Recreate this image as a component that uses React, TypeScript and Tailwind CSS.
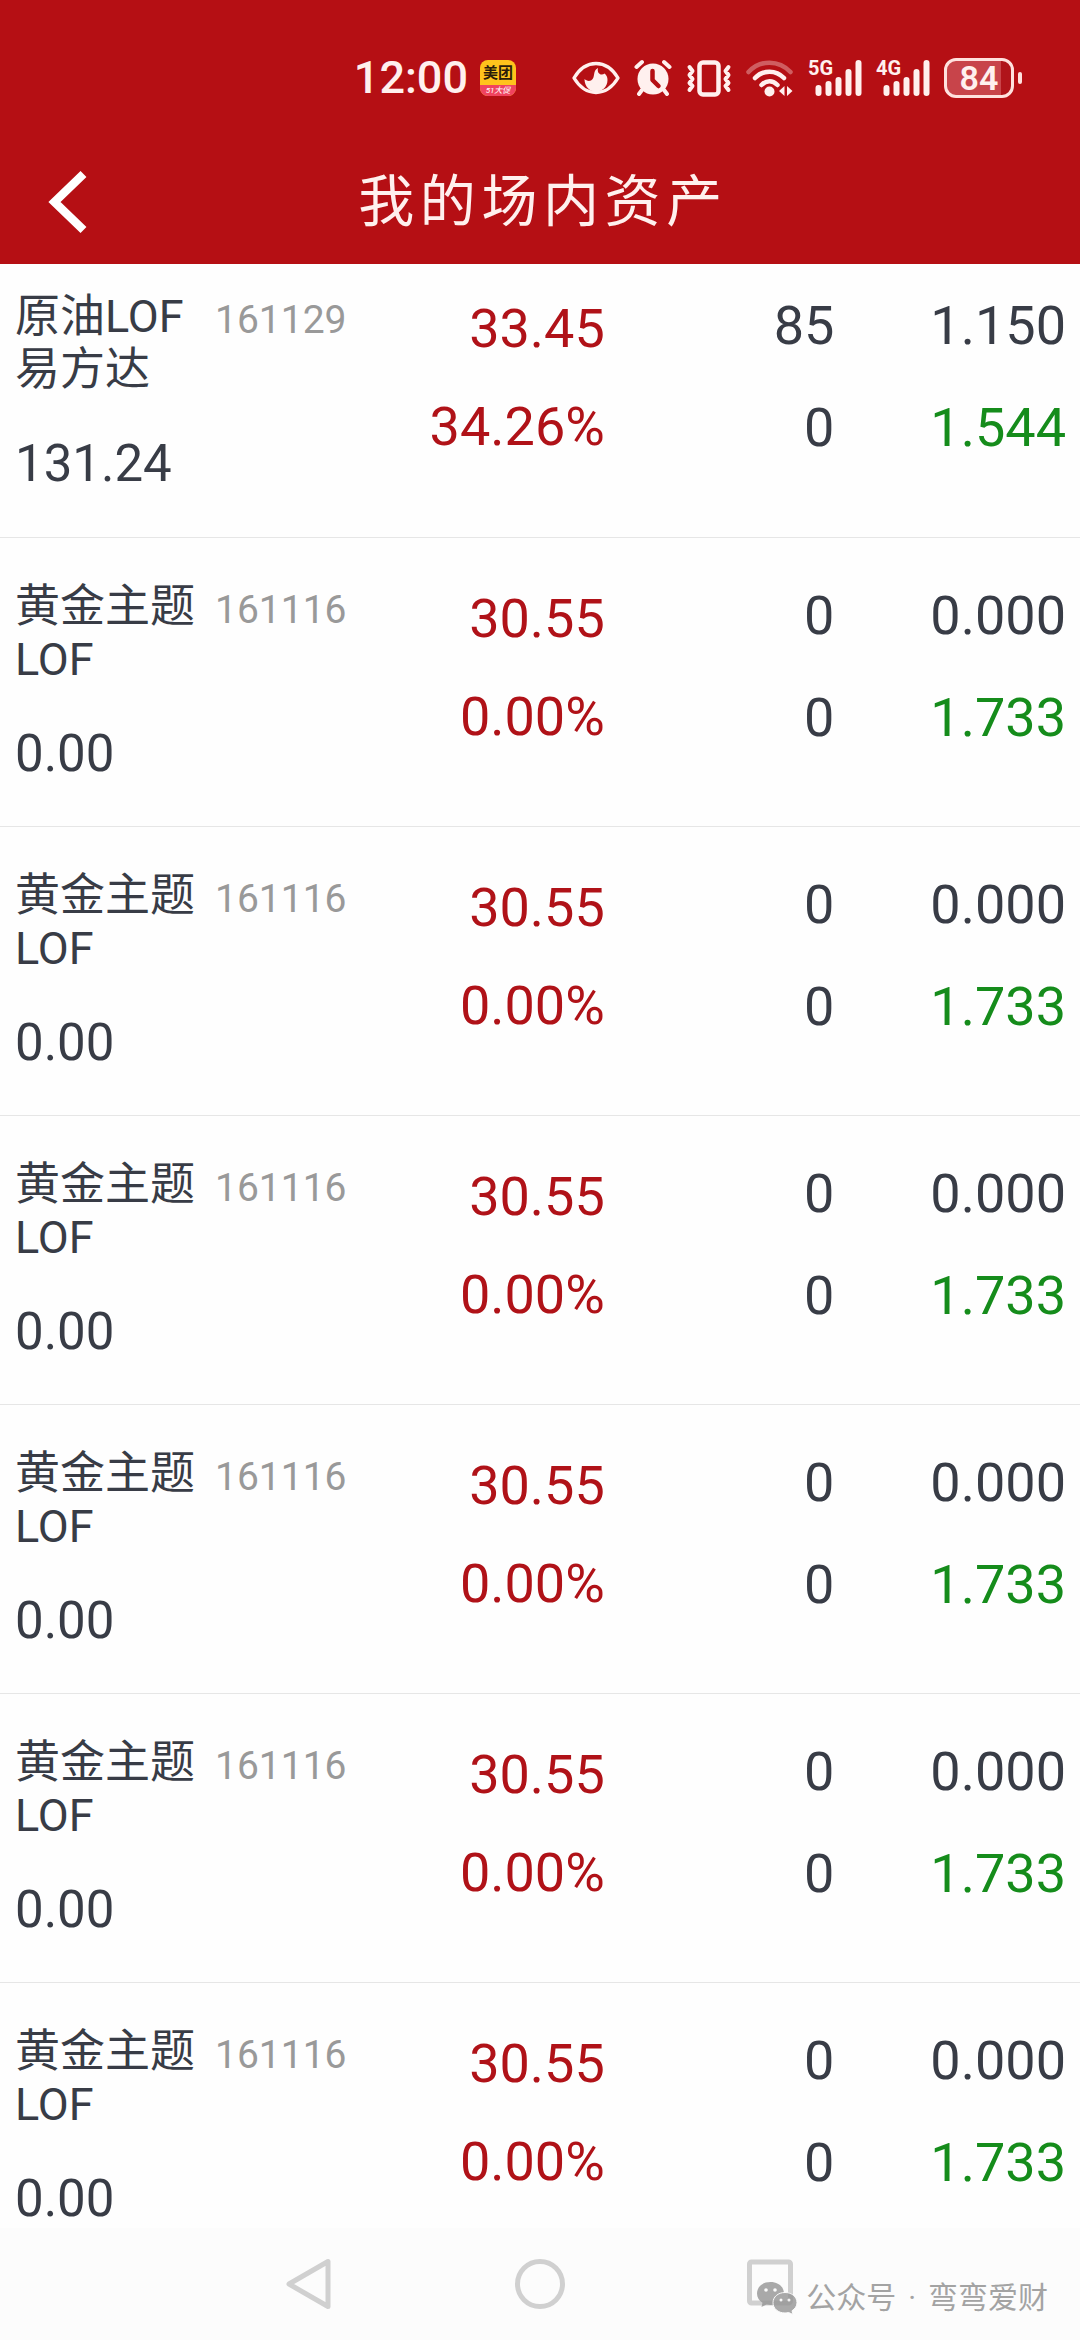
type Holding = {
  name: string;
  code: string;
  value: string;
  profit: string;
  rate: string;
  amount: string;
  available: string;
  cost: string;
  price: string;
};

const goldFund: Holding = {
  name: '黄金主题LOF',
  code: '161116',
  value: '0.00',
  profit: '30.55',
  rate: '0.00%',
  amount: '0',
  available: '0',
  cost: '0.000',
  price: '1.733',
};

const holdings: Holding[] = [
  {
    name: '原油LOF易方达',
    code: '161129',
    value: '131.24',
    profit: '33.45',
    rate: '34.26%',
    amount: '85',
    available: '0',
    cost: '1.150',
    price: '1.544',
  },
  goldFund,
  goldFund,
  goldFund,
  goldFund,
  goldFund,
  goldFund,
];

function EyeIcon() {
  return (
    <svg viewBox="0 0 48 34" className="h-[34px] w-12" fill="none">
      <path
        d="M2 17C8 7 15 2.500 24 2.500S40 7 46 17C40 27 33 31.500 24 31.500S8 27 2 17Z"
        stroke="currentColor"
        strokeWidth="3.400"
        strokeLinejoin="round"
      />
      <path
        d="M26 7C20 9.500 24 17 19 19.500C16.500 20.500 14 19.500 12.500 18C12.500 26 18 30.500 24 30.500S35.500 26 35.500 19C35.500 16 34.500 14 32.500 12.500C30 15 24.500 13 26 7Z"
        fill="currentColor"
      />
    </svg>
  );
}

function AlarmIcon() {
  return (
    <svg viewBox="0 0 38 38" className="size-[38px]" fill="none">
      <circle cx="19" cy="20" r="15.500" fill="currentColor" />
      <g stroke="currentColor" strokeWidth="4" strokeLinecap="round">
        <path d="M2.500 8 8 3M35.500 8 30 3M8 31l-3 4M30 31l3 4" />
      </g>
      <path
        d="M18.500 12v9l6 6"
        stroke="#b50f14"
        strokeWidth="4.500"
        strokeLinecap="round"
        strokeLinejoin="round"
      />
    </svg>
  );
}

function VibrateIcon() {
  return (
    <svg
      viewBox="0 0 46 38"
      className="h-[38px] w-[46px]"
      fill="none"
      stroke="currentColor"
      strokeLinecap="round"
      strokeLinejoin="round"
    >
      <rect x="13.500" y="3.500" width="19" height="32" rx="3.500" strokeWidth="4.500" />
      <path
        d="M3.500 8l3 4-3 4 3 4-3 4 3 3-3 4M42.500 8l-3 4 3 4-3 4 3 4-3 3 3 4"
        strokeWidth="4"
      />
    </svg>
  );
}

function WifiIcon() {
  return (
    <svg viewBox="0 0 48 38" className="h-[38px] w-12" fill="none">
      <g stroke="currentColor" strokeWidth="4.500" strokeLinecap="round">
        <path d="M2.500 13C14 .500 33 .500 44.500 13" opacity=".35" />
        <path d="M9 19C17 10.500 30 10.500 38 19" />
        <path d="M15.500 26c5-5 11-5 16 0" />
      </g>
      <circle cx="23.500" cy="32.500" r="5" fill="currentColor" />
      <path d="M38.500 27v10L33 32ZM41 27v10l5.500-5Z" fill="currentColor" />
    </svg>
  );
}

function Signal({ label }: { label: string }) {
  return (
    <div className="relative h-9 w-[54px]">
      <span className="absolute -top-1 left-0 text-[20px] leading-6 font-bold">
        {label}
      </span>
      <svg viewBox="0 0 54 36" className="h-9 w-[54px]">
        <g stroke="currentColor" strokeWidth="6" strokeLinecap="round">
          <path d="M10.500 28v5M20.500 24v9M30.500 20v13M40.500 12v21M50.500 3v30" />
        </g>
      </svg>
    </div>
  );
}

function Battery() {
  return (
    <div className="flex items-center gap-1">
      <div className="flex h-10 w-[70px] items-center justify-center rounded-xl border-3 border-[#ffe1de] bg-linear-to-r from-[#c8444a] from-84% to-[#b0141a] to-84% text-[34px] leading-9 font-semibold">
        84
      </div>
      <span className="h-3 w-1 rounded-full bg-[#ffe1de]" />
    </div>
  );
}

function StatusBar() {
  return (
    <div className="flex items-center justify-end pt-14 pr-[58px]">
      <span className="text-[45px] leading-11 font-medium">12:00</span>
      <div className="ml-3 flex size-9 flex-col overflow-hidden rounded-lg bg-[#ffc31c] text-center">
        <span className="h-[25px] text-[15px] leading-[26px] font-bold text-[#2b1c0a]">
          美团
        </span>
        <span className="h-[11px] bg-[#f0435f] text-[8px] leading-[11px] text-white italic">
          51大促
        </span>
      </div>
      <div className="ml-14 flex items-center gap-3.5">
        <EyeIcon />
        <AlarmIcon />
        <VibrateIcon />
        <WifiIcon />
        <Signal label="5G" />
        <Signal label="4G" />
        <Battery />
      </div>
    </div>
  );
}

function HoldingRow({ item }: { item: Holding }) {
  return (
    <tr className="h-[289px] border-b border-[#e6e6e6] align-top">
      <td className="pt-[42px] pl-[15px]">
        <div className="flex gap-5">
          <span className="w-[180px] text-[45px] leading-[53px]">
            {item.name}
          </span>
          <span className="text-[39px] leading-[60px] text-[#999999]">
            {item.code}
          </span>
        </div>
        <div className="pt-[38px] text-[51px] leading-[60px]">{item.value}</div>
      </td>
      <td className="pt-[51px] text-right text-[54px] leading-[60px] text-[#b01218]">
        <div>{item.profit}</div>
        <div className="pt-[38px]">{item.rate}</div>
      </td>
      <td className="pt-12 pr-2 text-right text-[54px] leading-[60px]">
        <div>{item.amount}</div>
        <div className="pt-[42px]">{item.available}</div>
      </td>
      <td className="pt-12 pr-3.5 text-right text-[54px] leading-[60px]">
        <div>{item.cost}</div>
        <div className="pt-[42px] text-[#158c1b]">{item.price}</div>
      </td>
    </tr>
  );
}

function WeChatMark() {
  return (
    <svg viewBox="0 0 42 34" className="h-[34px] w-[42px] opacity-80">
      <path
        d="M14.500 1C6.500 1 1 6 1 12.500c0 4 2 7 5.500 9.200L5.500 26l5-2.600c1.300.300 2.600.500 4 .500C22.500 24 28 19 28 12.500S22.500 1 14.500 1Z"
        fill="#959595"
      />
      <path
        d="M29 11.500c-7 0-12 4.500-12 10.200S22 32 29 32c1.300 0 2.500-.200 3.600-.500L37 33.500l-1-3.700c3-2 5-4.700 5-8.100 0-5.700-5-10.200-12-10.200Z"
        fill="#959595"
        stroke="#fcfcfc"
      />
      <g fill="#fcfcfc">
        <circle cx="10" cy="9" r="1.800" />
        <circle cx="19" cy="9" r="1.800" />
        <circle cx="25" cy="19" r="1.500" />
        <circle cx="33" cy="19" r="1.500" />
      </g>
    </svg>
  );
}

function NavBar() {
  const icon = 'size-[54px] fill-none stroke-[#d0d0d0] stroke-5';
  return (
    <nav className="relative flex h-28 shrink-0 items-center justify-center gap-44 bg-[#fcfcfc]">
      <button type="button" aria-label="返回">
        <svg viewBox="0 0 54 54" className={icon}>
          <path d="M45 4.500v45L6 27Z" strokeLinejoin="round" />
        </svg>
      </button>
      <button type="button" aria-label="主页">
        <svg viewBox="0 0 54 54" className={icon}>
          <circle cx="27" cy="27" r="22.500" />
        </svg>
      </button>
      <button type="button" aria-label="最近任务">
        <svg viewBox="0 0 54 54" className={icon}>
          <rect x="6.500" y="5" width="41" height="41" rx="2" />
        </svg>
      </button>
      <div className="absolute right-8 bottom-6 flex items-center gap-2 text-[30px] leading-9 text-[#a3a3a3]">
        <WeChatMark />
        <p className="flex gap-3">
          <span>公众号</span>
          <span>·</span>
          <span>弯弯爱财</span>
        </p>
      </div>
    </nav>
  );
}

export default function App() {
  return (
    <div className="flex h-screen flex-col overflow-hidden bg-[#fefefe] font-['Roboto','Noto_Sans_CJK_SC',sans-serif] text-[#383c46]">
      <header className="z-10 h-66 shrink-0 bg-[#b50f14] text-[#fff0ee]">
        <StatusBar />
        <div className="grid grid-cols-[1fr_auto_1fr] items-center pt-[62px]">
          <button type="button" aria-label="返回" className="ml-11 w-12">
            <svg viewBox="0 0 48 64" className="h-16 w-12" fill="none">
              <path d="M39.500 4 10.500 32l29 28" stroke="#fff" strokeWidth="8.500" />
            </svg>
          </button>
          <h1 className="pl-1.5 text-[56px] leading-[80px] font-normal tracking-widest">
            我的场内资产
          </h1>
        </div>
      </header>
      <main className="min-h-0 flex-1 overflow-hidden">
        <table className="-mt-4 w-full table-fixed border-collapse">
          <colgroup>
            <col className="w-[33%]" />
            <col className="w-[23%]" />
            <col className="w-[22%]" />
            <col className="w-[22%]" />
          </colgroup>
          <tbody>
            {holdings.map((item, i) => (
              <HoldingRow key={i} item={item} />
            ))}
          </tbody>
        </table>
      </main>
      <NavBar />
    </div>
  );
}
